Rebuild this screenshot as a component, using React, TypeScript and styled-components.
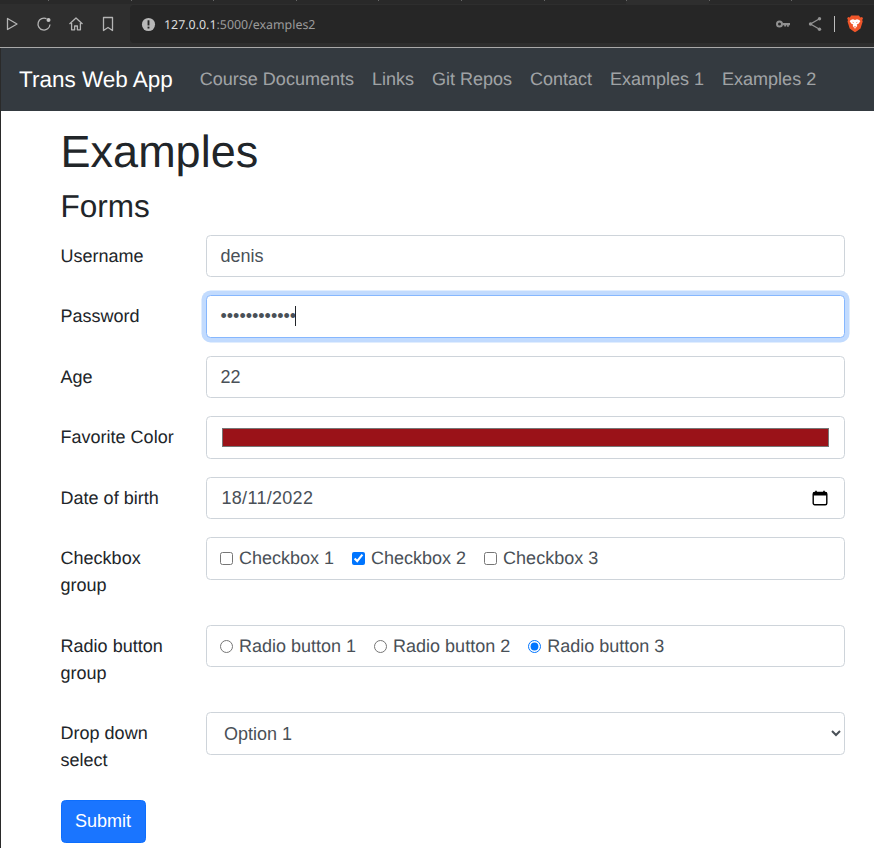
import React from "react";
import styled, { createGlobalStyle, css } from "styled-components";

const GlobalStyle = createGlobalStyle`
  html, body {
    margin: 0;
    padding: 0;
    background: #fff;
    overflow: hidden;
  }
  * {
    box-sizing: border-box;
  }
  body {
    font-family: "Liberation Sans", Arial, sans-serif;
    font-size: 18px;
    line-height: 27px;
    color: #212529;
    text-rendering: geometricPrecision;
  }
`;

const navLinks = ["Course Documents", "Links", "Git Repos", "Contact", "Examples 1", "Examples 2"];
const tabs = [0, 1, 2, 3, 4, 5, 6, 7, 8, 9];

function App() {
  return (
    <>
      <GlobalStyle />
      <BrowserBar>
        <TabStrip>
          {tabs.map((tab) => (
            <Tab key={tab} $active={tab === 7} />
          ))}
        </TabStrip>
        <Toolbar>
          <ToolButtons>
            <ToolIcon viewBox="0 0 16 16">
              <path d="M3.5 2.500 13 8l-9.500 5.500z" fill="none" stroke="#b4b4b4" strokeWidth="1.300" strokeLinejoin="round" />
            </ToolIcon>
            <ToolIcon viewBox="0 0 16 16">
              <path d="M14 8.500A6 6 0 1 1 10.500 2.600" fill="none" stroke="#b4b4b4" strokeWidth="1.300" />
              <circle cx="12.500" cy="4" r="2" fill="#c4c4c4" />
            </ToolIcon>
            <ToolIcon viewBox="0 0 16 16">
              <path d="M1.500 8 8 2l6.500 6M3.600 7v6.800h3V10h2.800v3.800h3V7" fill="none" stroke="#b4b4b4" strokeWidth="1.300" strokeLinejoin="round" />
            </ToolIcon>
            <ToolIcon viewBox="0 0 16 16">
              <path d="M3.500 1.500h9v13L8 11.500l-4.500 3z" fill="none" stroke="#b4b4b4" strokeWidth="1.300" strokeLinejoin="round" />
            </ToolIcon>
          </ToolButtons>
          <UrlBar>
            <InfoIcon viewBox="0 0 16 16">
              <circle cx="8" cy="8" r="7" fill="#b8b8b8" />
              <rect x="7" y="3.500" width="2" height="5.500" fill="#262626" />
              <rect x="7" y="10.300" width="2" height="2" fill="#262626" />
            </InfoIcon>
            <UrlText>
              <UrlHost>127.0.0.1</UrlHost>:5000/examples2
            </UrlText>
            <UrlActions>
              <ActionIcon $gap={16} viewBox="0 0 16 16">
                <circle cx="4.500" cy="8" r="2.500" fill="none" stroke="#929292" strokeWidth="2" />
                <path d="M7.500 7h7.500v2.200h-1.200v1.600h-1.700V9.200h-1v1.200H9.200V9.200H7.500z" fill="#929292" />
              </ActionIcon>
              <ActionIcon $gap={11} viewBox="0 0 16 16">
                <path d="M12.500 2.800 3.500 8l9 5.200" fill="none" stroke="#929292" strokeWidth="1.300" />
                <circle cx="12.500" cy="2.800" r="1.700" fill="#929292" />
                <circle cx="3.500" cy="8" r="1.700" fill="#929292" />
                <circle cx="12.500" cy="13.200" r="1.700" fill="#929292" />
              </ActionIcon>
              <ActionDivider />
              <BraveIcon viewBox="0 0 16 18">
                <path d="M4.200.6h7.600l1.600 1.800 1.700-.3.900 1.300-.8 1.600.5 1.400-2.200 7-3.400 2.600L8 17.300 6.100 16l-3.400-2.600-2.200-7 .5-1.400-.8-1.600.9-1.300 1.700.3z" fill="#f0562a" />
                <path d="M3.700 5 6 4.300l2 .6 2-.6 2.300.7 1 1.300-1.800 2.400-1.700.7.500 1.600L8 13.700l-2.300-2.700.5-1.600-1.700-.7-1.800-2.400z" fill="#fff" />
                <path d="M6.800 7.200 5.500 6.800l.6 1.200zM9.200 7.200l1.300-.4-.6 1.200zM6.700 11.400h2.600L8 12.700z" fill="#f0562a" />
              </BraveIcon>
            </UrlActions>
          </UrlBar>
        </Toolbar>
      </BrowserBar>

      <Page>
        <Navbar>
          <Brand>Trans Web App</Brand>
          <NavList>
            {navLinks.map((link) => (
              <NavLink key={link}>{link}</NavLink>
            ))}
          </NavList>
        </Navbar>

        <Container>
          <Title>Examples</Title>
          <Subtitle>Forms</Subtitle>
          <form onSubmit={(e) => e.preventDefault()}>
            <Row>
              <RowLabel>Username</RowLabel>
              <TextInput type="text" defaultValue="denis" readOnly />
            </Row>
            <Row>
              <RowLabel>Password</RowLabel>
              <FieldWrap>
                <TextInput $focused type="password" defaultValue="mysecretpass" readOnly />
                <Caret />
              </FieldWrap>
            </Row>
            <Row>
              <RowLabel>Age</RowLabel>
              <TextInput type="text" defaultValue="22" readOnly />
            </Row>
            <Row>
              <RowLabel>Favorite Color</RowLabel>
              <ColorInput type="color" defaultValue="#9a1218" />
            </Row>
            <Row>
              <RowLabel>Date of birth</RowLabel>
              <FieldWrap>
                <DateText type="text" defaultValue="18/11/2022" readOnly />
                <CalendarIcon viewBox="0 0 16 16">
                  <path d="M4 .8v2M12 .8v2" stroke="#000" strokeWidth="1.600" />
                  <rect x="1.200" y="2.500" width="13.600" height="12.300" rx="1.500" fill="none" stroke="#000" strokeWidth="1.400" />
                  <rect x="1.200" y="2.500" width="13.600" height="3" fill="#000" />
                </CalendarIcon>
              </FieldWrap>
            </Row>
            <Row>
              <RowLabel>Checkbox group</RowLabel>
              <OptionBox>
                <Option>
                  <input type="checkbox" />
                  Checkbox 1
                </Option>
                <Option>
                  <input type="checkbox" defaultChecked />
                  Checkbox 2
                </Option>
                <Option>
                  <input type="checkbox" />
                  Checkbox 3
                </Option>
              </OptionBox>
            </Row>
            <Row>
              <RowLabel>Radio button group</RowLabel>
              <OptionBox>
                <Option>
                  <input type="radio" name="radio-group" />
                  Radio button 1
                </Option>
                <Option>
                  <input type="radio" name="radio-group" />
                  Radio button 2
                </Option>
                <Option>
                  <input type="radio" name="radio-group" defaultChecked />
                  Radio button 3
                </Option>
              </OptionBox>
            </Row>
            <Row>
              <RowLabel>Drop down select</RowLabel>
              <Select defaultValue="Option 1">
                <option>Option 1</option>
                <option>Option 2</option>
                <option>Option 3</option>
              </Select>
            </Row>
            <SubmitButton type="submit">Submit</SubmitButton>
          </form>
        </Container>
      </Page>
    </>
  );
}

export default App;

/* browser chrome */

const BrowserBar = styled.div`
  height: 48px;
  background: #2e2e2e;
  border-bottom: 1px solid #a9a9a9;
  display: flex;
  flex-direction: column;
`;

const TabStrip = styled.div`
  height: 4px;
  padding-left: 48px;
  display: flex;
  background: #292929;
`;

const Tab = styled.div<{ $active?: boolean }>`
  width: 85px;
  height: 4px;
  background: ${(props) => (props.$active ? "#2e2e2e" : "transparent")};

  &::before {
    content: "";
    display: block;
    width: 1px;
    height: 1px;
    background: #666;
  }
`;

const Toolbar = styled.div`
  height: 43px;
  display: flex;
  align-items: flex-start;
`;

const ToolButtons = styled.div`
  width: 130px;
  height: 40px;
  padding-left: 4px;
  display: flex;
  align-items: center;
  gap: 16px;
`;

const ToolIcon = styled.svg`
  width: 16px;
  height: 16px;
`;

const UrlBar = styled.div`
  flex: 1;
  height: 38px;
  margin-top: 1px;
  background: #262626;
  border-radius: 4px 0 0 4px;
  padding-left: 11px;
  display: flex;
  align-items: center;
`;

const InfoIcon = styled.svg`
  width: 15px;
  height: 15px;
`;

const UrlText = styled.span`
  margin-left: 8px;
  font-family: "Noto Sans", sans-serif;
  font-size: 12.400px;
  color: #9a9a9a;
`;

const UrlHost = styled.span`
  color: #dcdcdc;
`;

const UrlActions = styled.div`
  margin-left: auto;
  padding-right: 11px;
  display: flex;
  align-items: center;
`;

const ActionIcon = styled.svg<{ $gap: number }>`
  width: 16px;
  height: 16px;
  margin-right: ${(props) => props.$gap}px;
`;

const ActionDivider = styled.div`
  width: 1px;
  height: 16px;
  margin-right: 12px;
  background: #bdbdbd;
`;

const BraveIcon = styled.svg`
  width: 16px;
  height: 18px;
`;

/* page */

const Page = styled.div`
  height: 800px;
  border-left: 1px solid #2a2a2a;
  background: #fff;
`;

const Navbar = styled.nav`
  height: 63px;
  padding-left: 18px;
  background: #343a40;
  display: flex;
  align-items: center;
`;

const Brand = styled.a`
  font-size: 22.500px;
  color: #fff;
  margin-right: 27px;
`;

const NavList = styled.div`
  display: flex;
  gap: 18px;
`;

const NavLink = styled.a`
  color: rgba(255, 255, 255, 0.55);
`;

const Container = styled.div`
  width: 844px;
  padding-left: 59.600px;
`;

const Title = styled.h1`
  margin: 14px 0 0;
  font-size: 45px;
  font-weight: 400;
  line-height: 54px;
`;

const Subtitle = styled.h3`
  margin: 8px 0 9.900px;
  font-size: 31.500px;
  font-weight: 400;
  line-height: 38px;
`;

const Row = styled.div`
  display: grid;
  grid-template-columns: 145.400px 1fr;
  margin-bottom: 17.900px;
`;

const RowLabel = styled.label`
  padding: 8px 30px 7.500px 0;
`;

const FieldWrap = styled.div`
  position: relative;
`;

const controlBase = css`
  width: 100%;
  height: 42.600px;
  border: 1.110px solid #ced4da;
  border-radius: 4.500px;
  background: #fff;
  color: #495057;
  font-family: inherit;
  font-size: 18px;
`;

const TextInput = styled.input<{ $focused?: boolean }>`
  ${controlBase}
  display: block;
  padding: 0 13.500px;
  outline: none;

  ${(props) =>
    props.$focused &&
    css`
      border-color: #86b7fe;
      box-shadow: 0 0 0 4.500px rgba(13, 110, 253, 0.25);
    `}
`;

const DateText = styled(TextInput)`
  padding-left: 14.500px;
  letter-spacing: 0.3px;
`;

const Caret = styled.div`
  position: absolute;
  left: 89px;
  top: 11px;
  width: 1px;
  height: 20px;
  background: #212529;
`;

const CalendarIcon = styled.svg`
  position: absolute;
  right: 17px;
  top: 13px;
  width: 16px;
  height: 16px;
`;

const ColorInput = styled.input`
  ${controlBase}
  display: block;
  padding: 10.500px 15px;
  cursor: pointer;

  &::-webkit-color-swatch-wrapper {
    padding: 0;
  }

  &::-webkit-color-swatch {
    border: 1px solid #767676;
    border-radius: 0;
  }
`;

const OptionBox = styled.div`
  ${controlBase}
  padding: 0 13px;
  display: flex;
  align-items: center;
  gap: 18px;
`;

const Option = styled.label`
  display: flex;
  align-items: center;
  gap: 6px;

  input {
    width: 13px;
    height: 13px;
    margin: 0;
  }
`;

const Select = styled.select`
  ${controlBase}
  display: block;
  padding: 1px 13px 0;
`;

const SubmitButton = styled.button`
  display: block;
  width: 85px;
  height: 42.600px;
  margin-top: 18.500px;
  border: 1px solid #0d6efd;
  border-radius: 4.500px;
  background: #1a75ff;
  color: #fff;
  font-family: inherit;
  font-size: 18px;
`;
